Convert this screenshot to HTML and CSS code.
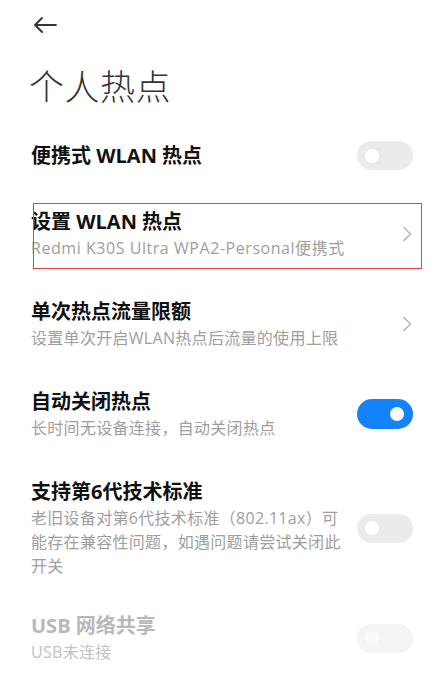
FILE: index.html
```html
<!DOCTYPE html>
<html lang="zh-CN">
<head>
<meta charset="utf-8">
<link rel="stylesheet" href="styles.css">
</head>
<body>
<div class="page">
  <header class="header">
    <svg class="back" width="24" height="16" viewBox="0 0 24 16">
      <path d="M23 8 H2 M9 1 L2 8 L9 15" fill="none" stroke="#333" stroke-width="1.8" stroke-linecap="round" stroke-linejoin="round"/>
    </svg>
    <h1 class="title">个人热点</h1>
  </header>
  <main class="list">
    <div class="row">
      <div class="text">
        <div class="label">便携式 WLAN 热点</div>
      </div>
      <div class="switch off"><span class="knob"></span></div>
    </div>
    <div class="row highlighted">
      <div class="text">
        <div class="label">设置 WLAN 热点</div>
        <div class="sub latin">Redmi K30S Ultra WPA2-Personal便携式</div>
      </div>
      <svg class="chev" width="10" height="16" viewBox="0 0 10 16"><path d="M1.5 1 L8.5 8 L1.5 15" fill="none" stroke="#b0b0b0" stroke-width="1.3"/></svg>
      <div class="mark"></div>
    </div>
    <div class="row">
      <div class="text">
        <div class="label">单次热点流量限额</div>
        <div class="sub">设置单次开启WLAN热点后流量的使用上限</div>
      </div>
      <svg class="chev" width="10" height="16" viewBox="0 0 10 16"><path d="M1.5 1 L8.5 8 L1.5 15" fill="none" stroke="#b0b0b0" stroke-width="1.3"/></svg>
    </div>
    <div class="row">
      <div class="text">
        <div class="label">自动关闭热点</div>
        <div class="sub">长时间无设备连接，自动关闭热点</div>
      </div>
      <div class="switch on"><span class="knob"></span></div>
    </div>
    <div class="row tall">
      <div class="text narrow">
        <div class="label">支持第6代技术标准</div>
        <div class="sub">老旧设备对第6代技术标准（802.11ax）可能存在兼容性问题，如遇问题请尝试关闭此开关</div>
      </div>
      <div class="switch off"><span class="knob"></span></div>
    </div>
    <div class="row disabled">
      <div class="text">
        <div class="label">USB 网络共享</div>
        <div class="sub">USB未连接</div>
      </div>
      <div class="switch off dim"><span class="knob"></span></div>
    </div>
  </main>
</div>
</body>
</html>
```

FILE: styles.css
```css
html, body {
  margin: 0;
  padding: 0;
  background: #ffffff;
}
body {
  font-family: "Open Sans", "Noto Sans CJK SC", sans-serif;
  width: 436px;
  height: 674px;
  overflow: hidden;
}
.page {
  padding: 0 23px 0 31px;
}
.header {
  padding-top: 17px;
}
.back {
  display: block;
  margin-left: 2px;
}
.title {
  margin: 28px 0 0 -2px;
  font-family: "Noto Sans CJK SC", sans-serif;
  font-size: 35px;
  line-height: 48px;
  font-weight: 300;
  color: #333;
  letter-spacing: 0.5px;
}
.list {
  margin-top: 13px;
}
.row {
  position: relative;
  display: flex;
  align-items: center;
  padding: 19px 0;
}
.row.tall {
  padding-bottom: 15px;
}
.text {
  flex: 1;
  min-width: 0;
}
.text.narrow {
  padding-right: 12px;
}
.label {
  font-size: 20px;
  line-height: 28px;
  font-weight: 700;
  color: #111;
}
.sub {
  font-size: 16px;
  line-height: 24px;
  letter-spacing: 0.3px;
  color: #9e9e9e;
}
.sub.latin {
  letter-spacing: 0.55px;
}
.disabled .label {
  color: #b8b8b8;
}
.disabled .sub {
  color: #c2c2c2;
}
.chev {
  display: block;
  flex: none;
  margin-right: 1px;
}
.switch {
  position: relative;
  flex: none;
  width: 56px;
  height: 29px;
  border-radius: 15px;
  background: #ebebeb;
}
.switch .knob {
  position: absolute;
  top: 7.5px;
  width: 14px;
  height: 14px;
  border-radius: 50%;
  background: #fff;
}
.switch.off .knob {
  left: 8px;
}
.switch.on {
  background: #1483fa;
  height: 30px;
}
.switch.on .knob {
  right: 9px;
  top: 8px;
}
.switch.dim {
  background: #f4f4f4;
}
.switch.dim .knob {
  background: #fafafa;
}
.mark {
  position: absolute;
  left: 2px;
  top: 14px;
  width: 387px;
  height: 64px;
  border: 1.5px solid #e2453f;
  pointer-events: none;
}
```
